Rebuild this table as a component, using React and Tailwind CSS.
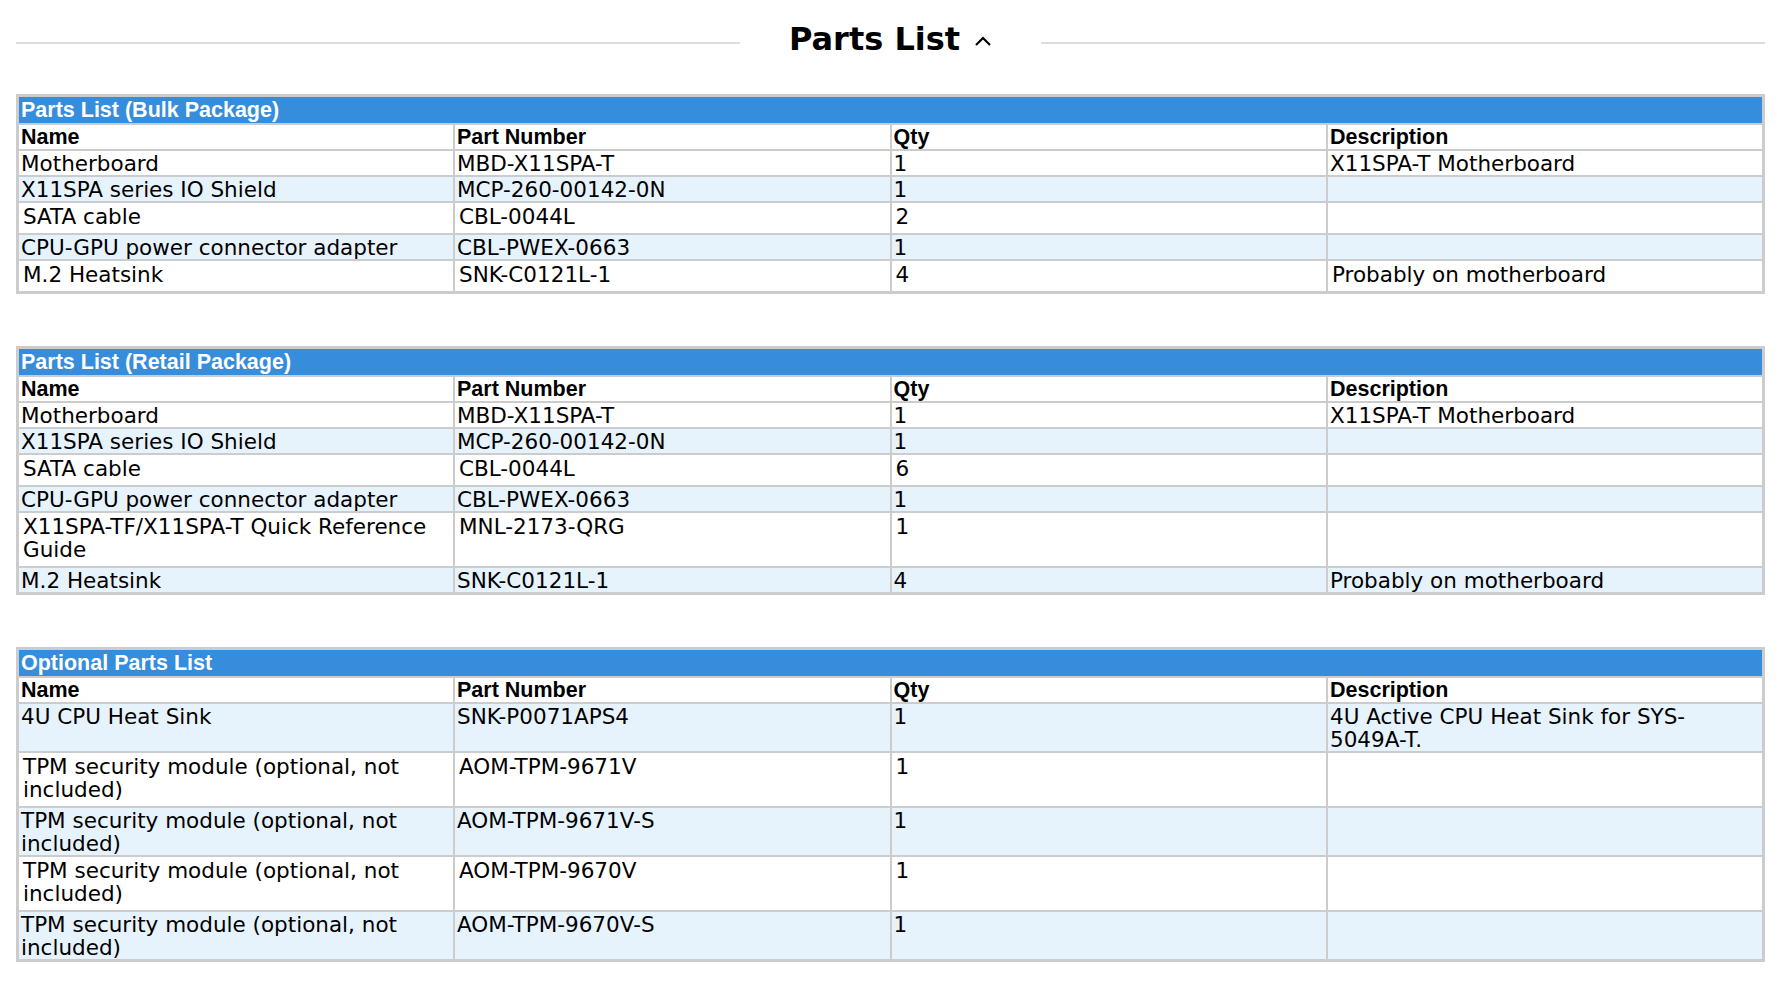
import React from 'react';

const BULK = [
  ['Motherboard', 'MBD-X11SPA-T', '1', 'X11SPA-T Motherboard'],
  ['X11SPA series IO Shield', 'MCP-260-00142-0N', '1', ''],
  ['SATA cable', 'CBL-0044L', '2', ''],
  ['CPU-GPU power connector adapter', 'CBL-PWEX-0663', '1', ''],
  ['M.2 Heatsink', 'SNK-C0121L-1', '4', 'Probably on motherboard'],
];

const RETAIL = [
  ['Motherboard', 'MBD-X11SPA-T', '1', 'X11SPA-T Motherboard'],
  ['X11SPA series IO Shield', 'MCP-260-00142-0N', '1', ''],
  ['SATA cable', 'CBL-0044L', '6', ''],
  ['CPU-GPU power connector adapter', 'CBL-PWEX-0663', '1', ''],
  ['X11SPA-TF/X11SPA-T Quick Reference Guide', 'MNL-2173-QRG', '1', ''],
  ['M.2 Heatsink', 'SNK-C0121L-1', '4', 'Probably on motherboard'],
];

const OPTIONAL = [
  ['4U CPU Heat Sink', 'SNK-P0071APS4', '1', '4U Active CPU Heat Sink for SYS-5049A-T.'],
  ['TPM security module (optional, not included)', 'AOM-TPM-9671V', '1', ''],
  ['TPM security module (optional, not included)', 'AOM-TPM-9671V-S', '1', ''],
  ['TPM security module (optional, not included)', 'AOM-TPM-9670V', '1', ''],
  ['TPM security module (optional, not included)', 'AOM-TPM-9670V-S', '1', ''],
];

const HEAD = ['Name', 'Part Number', 'Qty', 'Description'];

function PartsTable({ title, rows, firstStriped = false }) {
  return (
    <table className="w-full table-fixed border-collapse border-[3px] border-[#cccccc]">
      <colgroup>
        <col className="w-1/4" />
        <col className="w-1/4" />
        <col className="w-1/4" />
        <col className="w-1/4" />
      </colgroup>
      <thead>
        <tr>
          <th
            colSpan={4}
            className="bg-[#368ddb] text-white text-left font-bold font-['Liberation_Sans',Arial,sans-serif] text-[21.5px] leading-[26px] px-[2px] py-0 border-2 border-[#cccccc]"
          >
            {title}
          </th>
        </tr>
        <tr>
          {HEAD.map((h) => (
            <th
              key={h}
              className="bg-white text-black text-left align-top font-bold font-['Liberation_Sans',Arial,sans-serif] text-[21.5px] leading-[23px] px-[2px] pt-px pb-0 border-2 border-[#cccccc]"
            >
              {h}
            </th>
          ))}
        </tr>
      </thead>
      <tbody>
        {rows.map((r, i) => {
          const striped = firstStriped ? i % 2 === 0 : i % 2 === 1;
          const loose = !striped && i > 0;
          return (
            <tr key={i} className={striped ? 'bg-[#e6f3fd]' : 'bg-white'}>
              {r.map((c, j) => (
                <td
                  key={j}
                  className={[
                    'align-top text-black font-[Verdana,"DejaVu_Sans",sans-serif] text-[21.5px] leading-[23px] border-2 border-[#cccccc]',
                    loose ? 'px-[4px] pt-[2px] pb-[5px]' : 'px-[2px] pt-px pb-0',
                  ].join(' ')}
                >
                  {c}
                </td>
              ))}
            </tr>
          );
        })}
      </tbody>
    </table>
  );
}

export default function App() {
  return (
    <div className="min-h-screen bg-white pl-[16px] pr-[25px] pt-[17px] pb-10">
      {/* section heading */}
      <div className="flex items-center">
        <div className="flex-1 h-[2px] bg-[#dddddd]" />
        <div className="flex items-center gap-[14px] px-[49px] mb-[8px]">
          <h2 className="font-['DejaVu_Sans',Verdana,sans-serif] font-bold text-[32px] leading-[44px] text-black">
            Parts List
          </h2>
          <svg width="18" height="12" viewBox="0 0 18 12" className="mt-[4px]">
            <path d="M2 10 L9 3 L16 10" fill="none" stroke="#000" strokeWidth="2.2" />
          </svg>
        </div>
        <div className="flex-1 h-[2px] bg-[#dddddd]" />
      </div>

      <div className="mt-[25px] flex flex-col gap-[52px]">
        <PartsTable title="Parts List (Bulk Package)" rows={BULK} />
        <PartsTable title="Parts List (Retail Package)" rows={RETAIL} />
        <PartsTable title="Optional Parts List" rows={OPTIONAL} firstStriped />
      </div>
    </div>
  );
}
